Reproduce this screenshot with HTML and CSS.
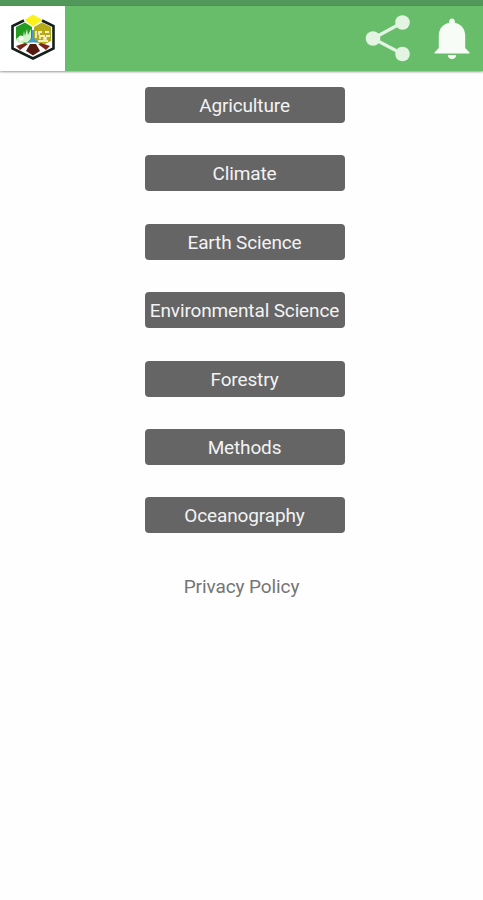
FILE: index.html
```
<!DOCTYPE html>
<html lang="en">
<head>
  <meta charset="UTF-8">
  <meta name="viewport" content="width=device-width, initial-scale=1">
  <title>Agriculture and Environment</title>
  <link rel="stylesheet" href="styles.css">
</head>
<body>

  <div class="status-bar"></div>
  <header class="toolbar">
    <a class="logo" href="#" aria-label="Home">
      <svg width="65" height="65" viewBox="0 6 65 65">
        <path d="M24 20.500L12.500 26V48.500L33 58.500L53.500 48.500V26L42 20.500" fill="none" stroke="#14211a" stroke-width="2.600"/>
        <path d="M16 27L25 22.500L32 27V42L24 43L16 40Z" fill="#239c20"/>
        <path d="M34 27L42 22.500L51 27V41L45 44L34 42Z" fill="#b5aa18"/>
        <path d="M24.500 20L33 14.500L42.500 20L33 26.500Z" fill="#fbf21c"/>
        <path d="M16 39L20 36L23 37L24 31L25 36L27 29L28 35L31 29V38L29 42L18 43Z" fill="#d5f3cb"/>
        <path d="M36 38V31M39 35V32H42M40 39V36H45M45 32H49M46 36H50M38 41H48" fill="none" stroke="#f3efb5" stroke-width="1.800"/>
        <circle cx="21" cy="38" r="2.500" fill="#f5fff0"/>
        <circle cx="45" cy="38.500" r="2" fill="#f2edbf"/>
        <path d="M32 30H34V38L39 42.500H27L32 38Z" fill="#4a9cce"/>
        <path d="M16 46L25 43L28 44L20 50ZM50 46L41 43L38 44L46 50Z" fill="#7a2518"/>
        <path d="M30 44H36L40 51L33 55.500L26 51Z" fill="#541b11"/>
      </svg>
    </a>
    <div class="actions">
      <a href="#" aria-label="Share">
        <svg width="46" height="48" viewBox="0 0 46 48">
          <path d="M37.500 8.500L8 24.500L37.500 40" fill="none" stroke="#e3f4e2" stroke-width="3.200"/>
          <g fill="#e3f4e2">
            <circle cx="37.500" cy="8.500" r="7.300"/>
            <circle cx="8" cy="24.500" r="7.300"/>
            <circle cx="37.500" cy="40" r="7.300"/>
          </g>
        </svg>
      </a>
      <a href="#" aria-label="Notifications">
        <svg width="36" height="42" viewBox="0 0 36 42">
          <path d="M18 0.500C16.300 0.500 15.200 1.600 15.200 3.300V4.700C8.500 6 4.800 11 4.800 18V30L0.500 34.500V35.500H35.500V34.500L31.200 30V18C31.200 11 27.500 6 20.800 4.700V3.300C20.800 1.600 19.700 0.500 18 0.500Z" fill="#f8fcf7"/>
          <path d="M13.800 37H22.200C22 39.800 20.500 41 18 41S14 39.800 13.800 37Z" fill="#f8fcf7"/>
        </svg>
      </a>
    </div>
  </header>

  <main class="menu">
    <button>Agriculture</button>
    <button>Climate</button>
    <button>Earth Science</button>
    <button>Environmental Science</button>
    <button>Forestry</button>
    <button>Methods</button>
    <button>Oceanography</button>
    <a class="privacy" href="#">Privacy Policy</a>
  </main>

</body>
</html>
```
FILE: styles.css
```
body {
  font-family: Roboto, sans-serif;
  background: #fefefe;
  margin: 0;
}
.status-bar {
  height: 6px;
  background: #509759;
}
.toolbar {
  display: flex;
  justify-content: space-between;
  height: 65px;
  background: #68bd6b;
  box-shadow: 0 1px 2px rgba(0, 0, 0, 0.4);
}
.logo {
  width: 65px;
  background: #fff;
}
.toolbar svg {
  display: block;
}
.actions {
  display: flex;
  align-items: flex-start;
  gap: 23px;
  padding: 8px 13px 0 0;
}
.actions a:last-child {
  padding-top: 4px;
}
.menu {
  display: flex;
  flex-direction: column;
  align-items: center;
  gap: 32.4px;
  padding: 16px 0 0 6px;
}
.menu button {
  width: 200px;
  height: 36px;
  padding: 1px 0 0;
  border: none;
  border-radius: 4px;
  background: #656565;
  color: #f3f3f3;
  font-family: inherit;
  font-size: 19px;
  letter-spacing: -0.14px;
  white-space: nowrap;
  cursor: pointer;
}
.privacy {
  margin: 9px 6px 0 0;
  color: #757575;
  font-size: 19px;
  line-height: 24px;
  letter-spacing: -0.1px;
  text-decoration: none;
}
```
